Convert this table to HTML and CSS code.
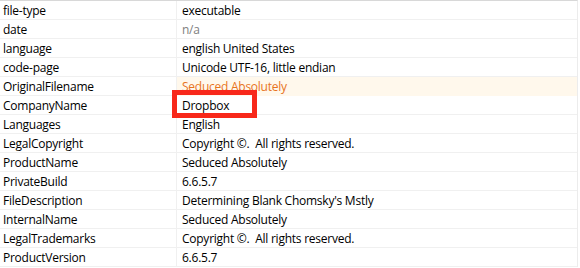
FILE: index.html
```html
<!DOCTYPE html>
<html>
<head>
<meta charset="utf-8">
<link rel="stylesheet" href="styles.css">
</head>
<body>
<div class="props">
  <div class="row"><div class="key">file-type</div><div class="val">executable</div></div>
  <div class="row"><div class="key">date</div><div class="val muted">n/a</div></div>
  <div class="row"><div class="key">language</div><div class="val">english United States</div></div>
  <div class="row"><div class="key">code-page</div><div class="val">Unicode UTF-16, little endian</div></div>
  <div class="row"><div class="key">OriginalFilename</div><div class="val warn">Seduced Absolutely</div></div>
  <div class="row"><div class="key">CompanyName</div><div class="val">Dropbox</div></div>
  <div class="row"><div class="key">Languages</div><div class="val">English</div></div>
  <div class="row"><div class="key">LegalCopyright</div><div class="val">Copyright &copy;.&nbsp; All rights reserved.</div></div>
  <div class="row"><div class="key">ProductName</div><div class="val">Seduced Absolutely</div></div>
  <div class="row"><div class="key">PrivateBuild</div><div class="val">6.6.5.7</div></div>
  <div class="row"><div class="key">FileDescription</div><div class="val">Determining Blank Chomsky's Mstly</div></div>
  <div class="row"><div class="key">InternalName</div><div class="val">Seduced Absolutely</div></div>
  <div class="row"><div class="key">LegalTrademarks</div><div class="val">Copyright &copy;.&nbsp; All rights reserved.</div></div>
  <div class="row"><div class="key">ProductVersion</div><div class="val">6.6.5.7</div></div>
  <div class="highlight"></div>
</div>
</body>
</html>
```
FILE: styles.css
```css
html, body {
  margin: 0;
  padding: 0;
  background: #ffffff;
}
body {
  font-family: "Open Sans", "Noto Sans", sans-serif;
  font-size: 12px;
  letter-spacing: -0.25px;
  color: #000;
}
.props {
  position: relative;
  width: 578px;
  border-top: 1px solid #d8d8d8;
  border-right: 1px solid #ececec;
  box-sizing: border-box;
}
.row {
  display: grid;
  grid-template-columns: 177px 1fr;
  height: 19px;
  border-bottom: 1px solid #f0f0f0;
  box-sizing: border-box;
}
.key, .val {
  line-height: 18px;
  padding-top: 1px;
  white-space: nowrap;
}
.key {
  padding-left: 3px;
  border-right: 1px solid #f0f0f0;
}
.val {
  padding-left: 5px;
}
.muted {
  color: #808080;
}
.warn {
  color: #e8741c;
  background: #fff8ec;
}
.highlight {
  position: absolute;
  left: 172px;
  top: 89px;
  width: 85px;
  height: 28px;
  border: 5px solid #f8281a;
  box-sizing: border-box;
}
```
